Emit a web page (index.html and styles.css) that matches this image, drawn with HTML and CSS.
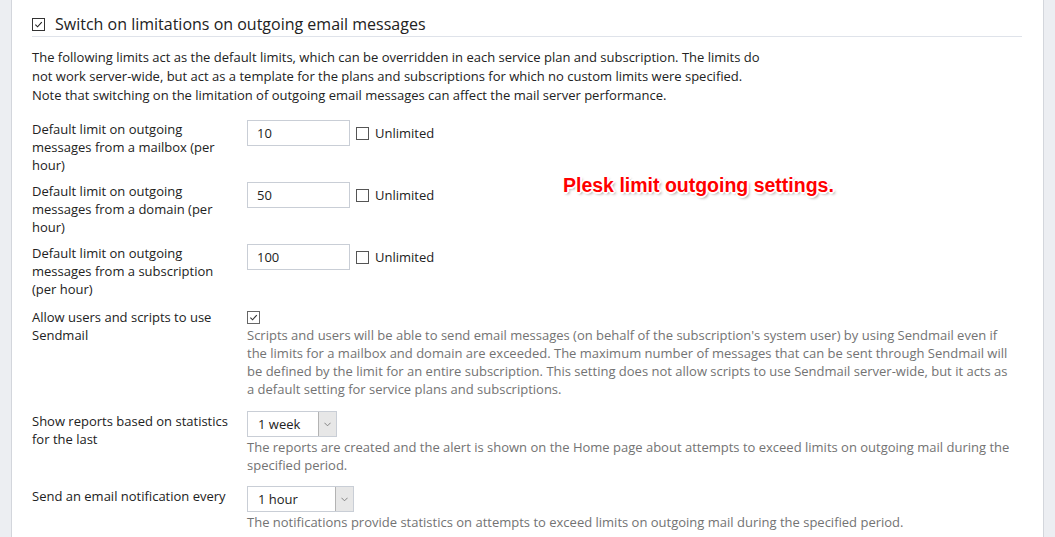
FILE: index.html
```html
<!DOCTYPE html>
<html lang="en">
<head>
<meta charset="utf-8">
<title>Outgoing mail limits</title>
<link rel="stylesheet" href="styles.css">
</head>
<body>
<div class="page">
  <div class="gutter gutter-left"></div>
  <main class="panel">
    <h2 class="section-title">
      <span class="cb cb-checked cb-dark"><svg viewBox="0 0 13 13"><path d="M2.8 6.6 L5.4 9.2 L10.4 3.6"/></svg></span>
      <span>Switch on limitations on outgoing email messages</span>
    </h2>
    <p class="intro">The following limits act as the default limits, which can be overridden in each service plan and subscription. The limits do not work server-wide, but act as a template for the plans and subscriptions for which no custom limits were specified. Note that switching on the limitation of outgoing email messages can affect the mail server performance.</p>

    <div class="form">
      <div class="row row-limit">
        <div class="label">Default limit on outgoing messages from a mailbox (per hour)</div>
        <div class="field">
          <div class="inline">
            <span class="input">10</span>
            <span class="cb"></span>
            <span class="cb-label">Unlimited</span>
          </div>
        </div>
      </div>
      <div class="row row-limit">
        <div class="label">Default limit on outgoing messages from a domain (per hour)</div>
        <div class="field">
          <div class="inline">
            <span class="input">50</span>
            <span class="cb"></span>
            <span class="cb-label">Unlimited</span>
          </div>
        </div>
      </div>
      <div class="row row-limit row-last-limit">
        <div class="label">Default limit on outgoing messages from a subscription (per hour)</div>
        <div class="field">
          <div class="inline">
            <span class="input">100</span>
            <span class="cb"></span>
            <span class="cb-label">Unlimited</span>
          </div>
        </div>
      </div>
      <div class="row row-wide">
        <div class="label">Allow users and scripts to use Sendmail</div>
        <div class="field">
          <div class="cb-line"><span class="cb cb-checked cb-light"><svg viewBox="0 0 13 13"><path d="M2.8 6.6 L5.4 9.2 L10.4 3.6"/></svg></span></div>
          <div class="hint">Scripts and users will be able to send email messages (on behalf of the subscription's system user) by using Sendmail even if the limits for a mailbox and domain are exceeded. The maximum number of messages that can be sent through Sendmail will be defined by the limit for an entire subscription. This setting does not allow scripts to use Sendmail server-wide, but it acts as a default setting for service plans and subscriptions.</div>
        </div>
      </div>
      <div class="row row-wide row-select row-tight">
        <div class="label">Show reports based on statistics for the last</div>
        <div class="field">
          <div class="select select-week"><span class="select-value">1 week</span><span class="select-arrow"><svg viewBox="0 0 8 5"><path d="M0.5 0.5 L4 4 L7.5 0.5"/></svg></span></div>
          <div class="hint hint-after-select">The reports are created and the alert is shown on the Home page about attempts to exceed limits on outgoing mail during the specified period.</div>
        </div>
      </div>
      <div class="row row-wide row-select">
        <div class="label">Send an email notification every</div>
        <div class="field">
          <div class="select select-hour"><span class="select-value">1 hour</span><span class="select-arrow"><svg viewBox="0 0 8 5"><path d="M0.5 0.5 L4 4 L7.5 0.5"/></svg></span></div>
          <div class="hint hint-after-select">The notifications provide statistics on attempts to exceed limits on outgoing mail during the specified period.</div>
        </div>
      </div>
    </div>

    <div class="annotation">Plesk limit outgoing settings.</div>
  </main>
  <div class="gutter gutter-right"></div>
</div>
</body>
</html>
```

FILE: styles.css
```css
html, body {
  margin: 0;
  padding: 0;
}
body {
  font-family: "Open Sans", "Noto Sans", sans-serif;
  font-size: 13px;
  color: #222;
  background: #eceef2;
}
.page {
  display: flex;
  width: 1055px;
  height: 537px;
  overflow: hidden;
}
.gutter {
  width: 11px;
  flex: none;
  background: #eceef2;
}
.gutter-left {
  border-right: 1px solid #d3d6dc;
}
.gutter-right {
  border-left: 1px solid #d3d6dc;
}
.panel {
  position: relative;
  flex: 1;
  background: #fff;
  padding: 13px 21px 0 20px;
}
.section-title {
  display: flex;
  align-items: center;
  gap: 10px;
  margin: 0;
  font-size: 16px;
  font-weight: normal;
  line-height: 23px;
  color: #222;
  border-bottom: 1px solid #dfe3ea;
  padding-bottom: 0;
}
.intro {
  margin: 11px 0 15px;
  max-width: 735px;
  line-height: 19px;
}
.cb {
  display: inline-block;
  box-sizing: border-box;
  width: 13px;
  height: 13px;
  border: 1px solid #555;
  background: #fff;
  flex: none;
}
.cb svg {
  display: block;
  width: 11px;
  height: 11px;
  fill: none;
  stroke-width: 1.3;
}
.cb-dark {
  border-color: #333;
}
.cb-dark svg {
  stroke: #222;
}
.cb-light {
  border-color: #666;
}
.cb-light svg {
  stroke: #333;
}
.row {
  display: grid;
  grid-template-columns: 215px 1fr;
  line-height: 18px;
}
.row-limit {
  margin-bottom: 8px;
}
.row-last-limit {
  margin-bottom: 10px;
}
.row-wide {
  margin-bottom: 13px;
}
.row-tight {
  margin-bottom: 12px;
}
.label {
  padding-right: 12px;
}
.row-select .label {
  padding-top: 1px;
}
.inline {
  display: flex;
  align-items: center;
}
.input {
  box-sizing: border-box;
  width: 103px;
  height: 26px;
  border: 1px solid #c9ced6;
  padding-left: 9px;
  line-height: 24px;
  margin-right: 6px;
}
.cb-label {
  margin-left: 6px;
}
.cb-line {
  height: 18px;
  display: flex;
  align-items: center;
}
.hint {
  color: #737373;
  line-height: 18px;
  max-width: 770px;
}
.hint-after-select {
  margin-top: 1px;
}
.select {
  box-sizing: border-box;
  display: flex;
  height: 26px;
  border: 1px solid #c9ced6;
}
.select-week {
  width: 90px;
}
.select-hour {
  width: 107px;
}
.select-value {
  flex: 1;
  padding-left: 10px;
  line-height: 24px;
}
.select-arrow {
  width: 17px;
  background: #e7e7e7;
  border-left: 1px solid #b3b3b3;
  display: flex;
  align-items: center;
  justify-content: center;
}
.select-arrow svg {
  width: 7px;
  height: 5px;
  fill: none;
  stroke: #777;
  stroke-width: 1;
}
.annotation {
  position: absolute;
  left: 551px;
  top: 174px;
  font-family: "Liberation Sans", Arial, sans-serif;
  font-weight: bold;
  font-size: 19.5px;
  color: #ff0000;
  text-shadow:
    -1px -1px 0 #fff, 1px -1px 0 #fff, -1px 1px 0 #fff, 1px 1px 0 #fff,
    0 -2px 0 #fff, 0 2px 0 #fff, -2px 0 0 #fff, 2px 0 0 #fff,
    2px 2px 3px rgba(0,0,0,0.45);
}
```
